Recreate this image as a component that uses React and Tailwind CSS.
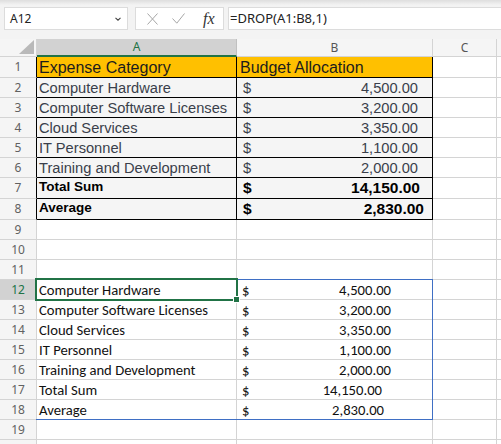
import React from "react";

const GRID = "border-[#d4d4d4]";

function RowHeader({ n, sel, black }) {
  return (
    <div
      className={`w-[37px] shrink-0 flex items-center justify-center border-b border-b-[#d4d4d4] border-r text-[12px] font-['Noto_Sans',sans-serif] ${
        black ? "border-r-black" : "border-r-[#d4d4d4]"
      } ${sel ? "bg-[#d2d2d2] text-[#217346]" : "bg-[#f5f5f5] text-[#616161]"}`}
    >
      {n}
    </div>
  );
}

function Tail() {
  return (
    <>
      <div className={`w-[64px] shrink-0 border-r border-b ${GRID}`}></div>
      <div className={`flex-1 border-b ${GRID}`}></div>
    </>
  );
}

function TopRow({ n, h, a, b, kind }) {
  const isHead = kind === "head";
  const isBold = kind === "bold";
  const bg = isHead ? "bg-[#ffc000]" : "bg-[#f5f5f5]";
  return (
    <div className={`flex ${h}`}>
      <RowHeader n={n} black />
      <div
        className={`w-[200px] shrink-0 flex items-center pl-[2px] border-r border-b border-black ${bg} font-['Liberation_Sans',Arial,sans-serif] whitespace-nowrap overflow-hidden ${
          isHead
            ? "text-[16px] text-[#1c1c1c] pt-[1px]"
            : isBold
            ? "text-[13.5px] font-bold text-black pb-[1px]"
            : "text-[14.67px] text-[#3a3f4b]"
        }`}
      >
        {a}
      </div>
      {isHead ? (
        <div className={`w-[196px] shrink-0 flex items-center pl-[3px] pt-[1px] border-r border-b border-black ${bg} font-['Liberation_Sans',Arial,sans-serif] text-[16px] text-[#1c1c1c] whitespace-nowrap`}>
          {b}
        </div>
      ) : (
        <div
          className={`w-[196px] shrink-0 flex items-center justify-between pl-[6px] border-r border-b border-black ${bg} font-['Liberation_Sans',Arial,sans-serif] ${
            isBold ? "text-[15.5px] font-bold text-black" : "text-[14.67px] text-[#3a3f4b] pr-[14px]"
          } ${n === 7 ? "pr-[12px]" : ""} ${n === 8 ? "pr-[8px]" : ""}`}
        >
          <span>$</span>
          <span>{b}</span>
        </div>
      )}
      <Tail />
    </div>
  );
}

function EmptyRow({ n }) {
  return (
    <div className="flex h-[20px]">
      <RowHeader n={n} />
      <div className={`w-[200px] shrink-0 border-r border-b ${GRID}`}></div>
      <div className={`w-[196px] shrink-0 border-r border-b ${GRID}`}></div>
      <Tail />
    </div>
  );
}

function BottomRow({ n, a, b, pr, sel }) {
  return (
    <div className="flex h-[20px] font-['Carlito','Lato',sans-serif] text-[14.67px] text-[#111]">
      <RowHeader n={n} sel={sel} />
      <div className={`w-[200px] shrink-0 flex items-center pl-[2px] border-r border-b ${GRID} whitespace-nowrap`}>
        {a}
      </div>
      <div className={`w-[196px] shrink-0 flex items-center justify-between pl-[5px] ${pr} border-r border-b ${GRID}`}>
        <span>$</span>
        <span>{b}</span>
      </div>
      <Tail />
    </div>
  );
}

export default function App() {
  return (
    <div className="w-[501px] h-[444px] overflow-hidden bg-[#f3f3f3] relative">
      {/* formula bar */}
      <div className="h-[39px] relative">
        <div className="absolute top-0 left-0 right-0 h-[5px] bg-linear-to-b from-[#dedede] to-[#f3f3f3]"></div>
        <div className="relative flex pl-[4px] pt-[7px]">
          <div className="w-[124px] h-[23px] bg-white border border-[#dcdcdc] flex items-center justify-between pl-[5px] pr-[6px] font-['Noto_Sans',sans-serif] text-[12px] text-[#222]">
            <span>A12</span>
            <svg width="6" height="4" viewBox="0 0 6 4">
              <path d="M0.5 0.8 L3 3.2 L5.5 0.8" fill="none" stroke="#444" strokeWidth="1.1" />
            </svg>
          </div>
          <div className="ml-[7px] w-[89px] h-[23px] bg-white border border-[#dcdcdc] flex items-center pl-[11px]">
            <svg width="11" height="12" viewBox="0 0 11 12">
              <path d="M0.5 0.5 L10.5 11.5 M10.5 0.5 L0.5 11.5" stroke="#a6a6a6" strokeWidth="1" fill="none" />
            </svg>
            <svg className="ml-[14px]" width="13" height="11" viewBox="0 0 13 11">
              <path d="M0.5 5.5 L4.8 10.2 L12.5 0.5" stroke="#a6a6a6" strokeWidth="1" fill="none" />
            </svg>
            <span className="ml-[18px] font-['Liberation_Serif',serif] italic text-[16px] leading-none text-[#333]">
              fx
            </span>
          </div>
          <div className="ml-[4px] flex-1 h-[23px] bg-white border-y border-l border-[#dcdcdc] flex items-center pl-[1px] font-['Noto_Sans',sans-serif] text-[13px] text-[#222]">
            =DROP(A1:B8,1)
          </div>
        </div>
      </div>

      {/* sheet */}
      <div className="relative bg-white">
        {/* column headers */}
        <div className="flex h-[18px] font-['Noto_Sans',sans-serif] text-[12px]">
          <div className="w-[37px] shrink-0 bg-[#f5f5f5] border-r border-b border-[#d4d4d4] relative">
            <svg className="absolute left-0 top-0" width="36" height="17" viewBox="0 0 36 17">
              <path d="M19 15 L34 1 L34 15 Z" fill="#b9b9b9" />
            </svg>
          </div>
          <div className="w-[200px] shrink-0 bg-[#d2d2d2] border-r border-r-[#c0c0c0] border-b-2 border-b-[#217346] text-[#217346] flex items-center justify-center">
            A
          </div>
          <div className="w-[196px] shrink-0 bg-[#f5f5f5] border-r border-b border-[#d4d4d4] text-[#555] flex items-center justify-center">
            B
          </div>
          <div className="w-[64px] shrink-0 bg-[#f5f5f5] border-r border-b border-[#d4d4d4] text-[#555] flex items-center justify-center">
            C
          </div>
          <div className="flex-1 bg-[#f5f5f5] border-b border-[#d4d4d4]"></div>
        </div>

        <TopRow n={1} h="h-[21px]" a="Expense Category" b="Budget Allocation" kind="head" />
        <TopRow n={2} h="h-[20px]" a="Computer Hardware" b="4,500.00" />
        <TopRow n={3} h="h-[20px]" a="Computer Software Licenses" b="3,200.00" />
        <TopRow n={4} h="h-[20px]" a="Cloud Services" b="3,350.00" />
        <TopRow n={5} h="h-[20px]" a="IT Personnel" b="1,100.00" />
        <TopRow n={6} h="h-[20px]" a="Training and Development" b="2,000.00" />
        <TopRow n={7} h="h-[21px]" a="Total Sum" b="14,150.00" kind="bold" />
        <TopRow n={8} h="h-[21px]" a="Average" b="2,830.00" kind="bold" />
        <EmptyRow n={9} />
        <EmptyRow n={10} />
        <EmptyRow n={11} />
        <BottomRow n={12} a="Computer Hardware" b="4,500.00" pr="pr-[41px]" sel />
        <BottomRow n={13} a="Computer Software Licenses" b="3,200.00" pr="pr-[41px]" />
        <BottomRow n={14} a="Cloud Services" b="3,350.00" pr="pr-[41px]" />
        <BottomRow n={15} a="IT Personnel" b="1,100.00" pr="pr-[41px]" />
        <BottomRow n={16} a="Training and Development" b="2,000.00" pr="pr-[41px]" />
        <BottomRow n={17} a="Total Sum" b="14,150.00" pr="pr-[50px]" />
        <BottomRow n={18} a="Average" b="2,830.00" pr="pr-[48px]" />
        <EmptyRow n={19} />
        <EmptyRow n="" />

        {/* spill range outline */}
        <div className="absolute left-[36px] top-[240px] w-[397px] h-[141px] border-t border-r border-b border-[#3f6fc4] pointer-events-none"></div>
        {/* active cell */}
        <div className="absolute left-[35px] top-[239px] w-[203px] h-[23px] border-2 border-[#217346] pointer-events-none">
          <div className="absolute right-[-4px] bottom-[-4px] w-[7px] h-[7px] bg-[#217346] border border-white"></div>
        </div>
      </div>
    </div>
  );
}
